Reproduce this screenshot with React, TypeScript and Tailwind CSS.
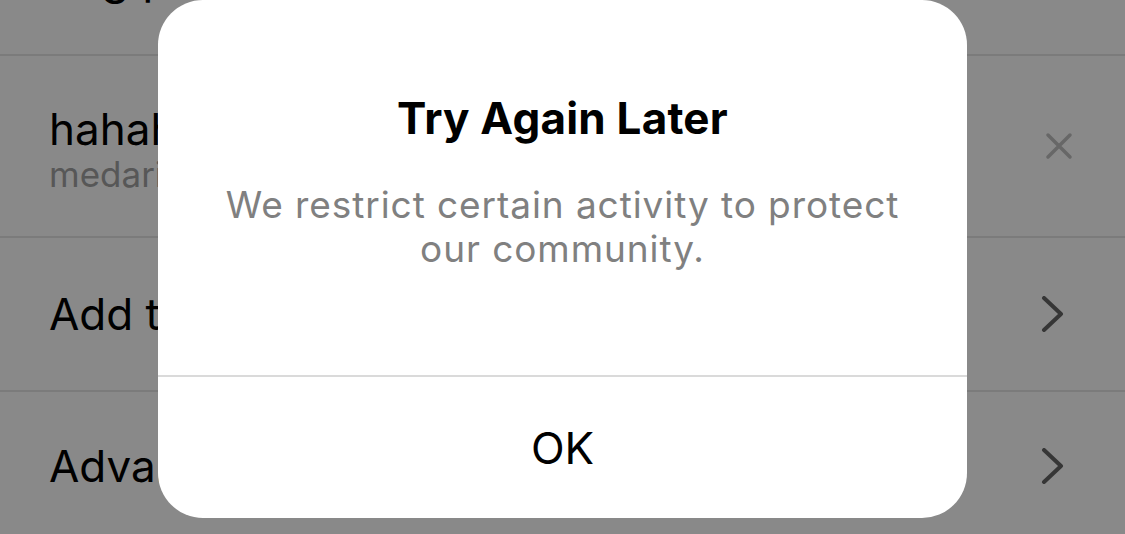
const Divider = () => <div className="h-[2px] bg-[#7b7b7b]" />;

const Chevron = () => (
  <svg width="24" height="36" viewBox="0 0 24 36" fill="none" className="text-[#363636]">
    <path d="M3 2 L20 18 L3 34" stroke="currentColor" strokeWidth="4" strokeLinecap="round" strokeLinejoin="round" />
  </svg>
);

const Close = () => (
  <svg width="28" height="28" viewBox="0 0 28 28" fill="none" className="text-[#676767]">
    <path d="M3 3 L25 25 M25 3 L3 25" stroke="currentColor" strokeWidth="3.5" strokeLinecap="round" />
  </svg>
);

export default function App() {
  return (
    <div className="relative w-[1125px] h-[534px] overflow-hidden bg-[#898989] font-['Inter','Liberation_Sans',sans-serif]">
      <div className="flex flex-col">
        <div className="h-[54px] overflow-hidden pl-[49px]">
          <div className="-mt-[46px] text-[46px] leading-none text-black">Tag people</div>
        </div>
        <Divider />
        <div className="h-[180px] flex items-center justify-between pl-[49px] pr-[52px]">
          <div className="flex flex-col pt-[8px]">
            <span className="text-[44px] leading-[48px] text-black">hahahaha</span>
            <span className="text-[35px] leading-[42px] text-[#575757]">medarich</span>
          </div>
          <Close />
        </div>
        <Divider />
        <div className="h-[152px] flex items-center justify-between pl-[49px] pr-[60px]">
          <span className="text-[44px] leading-[48px] text-black">Add to Close Friends</span>
          <Chevron />
        </div>
        <Divider />
        <div className="h-[152px] flex items-center justify-between pl-[49px] pr-[60px] pb-[4px]">
          <span className="text-[44px] leading-[48px] text-black">Advanced Settings</span>
          <Chevron />
        </div>
      </div>

      <div className="absolute left-[158px] top-0 w-[809px] h-[518px] rounded-[45px] bg-white flex flex-col overflow-hidden">
        <div className="h-[375px] flex flex-col items-center pt-[94px] text-center">
          <h2 className="text-[44px] leading-[48px] font-bold tracking-[0.005em] text-black">Try Again Later</h2>
          <p className="mt-[41px] w-[700px] text-[37px] leading-[44px] tracking-[0.025em] text-[#808080]">
            We restrict certain activity to protect our community.
          </p>
        </div>
        <div className="h-[2px] bg-[#dadada]" />
        <div className="flex-1 flex items-center justify-center">
          <span className="text-[44px] leading-none text-black">OK</span>
        </div>
      </div>
    </div>
  );
}
